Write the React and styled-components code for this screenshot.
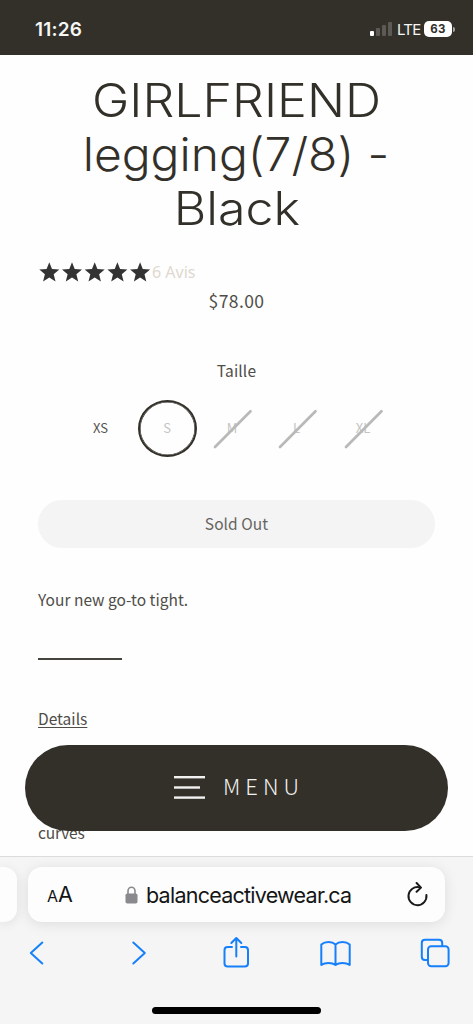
import React from "react";
import styled, { createGlobalStyle } from "styled-components";

const INK = "#33302a";
const BODY = `"Noto Sans CJK JP", "Noto Sans", sans-serif`;
const SYSTEM = `Inter, "Liberation Sans", sans-serif`;

const GlobalStyle = createGlobalStyle`
  * { box-sizing: border-box; }
  body { margin: 0; background: #fefefe; -webkit-font-smoothing: antialiased; }
`;

const Screen = styled.div`
  width: 473px;
  height: 1024px;
  display: flex;
  flex-direction: column;
  overflow: hidden;
  background: #fefefe;
  color: #4f4d48;
  font-family: ${BODY};
`;

const StatusBar = styled.header`
  height: 55px;
  flex: none;
  display: flex;
  align-items: center;
  justify-content: space-between;
  padding: 3px 18px 0 35px;
  background: ${INK};
  color: #f6f6f5;
  font-family: ${SYSTEM};
`;

const Clock = styled.span`
  font-size: 19px;
  font-weight: 600;
  letter-spacing: 0.2px;
`;

const StatusIcons = styled.div`
  display: flex;
  align-items: center;
`;

const Signal = styled.div`
  display: flex;
  align-items: flex-end;
  gap: 2px;
  height: 14px;
`;

const SignalBar = styled.i`
  width: 4px;
  height: ${(p) => p.$h}px;
  border-radius: 1px;
  background: ${(p) => (p.$on ? "#fff" : "#5d5a55")};
`;

const Network = styled.span`
  width: 22px;
  margin: 0 5px 0 5px;
  font-size: 15px;
  font-weight: 400;
  letter-spacing: -0.75px;
  white-space: nowrap;
`;

const Battery = styled.span`
  width: 28px;
  height: 16px;
  border-radius: 5px;
  background: #fff;
  color: ${INK};
  font-size: 11.5px;
  font-weight: 700;
  line-height: 16px;
  text-align: center;
  letter-spacing: 0.3px;
`;

const BatteryTip = styled.i`
  width: 2px;
  height: 5px;
  margin-left: 1px;
  border-radius: 0 2px 2px 0;
  background: #a5a39f;
`;

const Page = styled.main`
  position: relative;
  height: 801px;
  flex: none;
  overflow: hidden;
  display: flex;
  flex-direction: column;
  padding: 18px 38px 0;
`;

const Title = styled.h1`
  margin: 0;
  display: flex;
  flex-direction: column;
  align-items: center;
  font-family: ${SYSTEM};
  font-weight: 300;
  font-size: 46px;
  line-height: 54px;
  color: ${INK};
`;

const TitleLine = styled.span`
  white-space: pre;
  transform: scaleX(${(p) => p.$stretch});
`;

const Rating = styled.div`
  display: flex;
  align-items: center;
  height: 24px;
  margin-top: 25px;
`;

const Stars = styled.svg`
  width: 114px;
  height: 22px;
  fill: #333;
`;

const Reviews = styled.span`
  font-family: "Noto Sans", sans-serif;
  font-size: 16px;
  line-height: 24px;
  color: #e0d8d0;
`;

const Price = styled.div`
  height: 28px;
  margin-top: 3px;
  text-align: center;
  font-size: 17.5px;
  line-height: 28px;
  letter-spacing: 0.4px;
`;

const OptionLabel = styled.div`
  height: 24px;
  margin-top: 43px;
  text-align: center;
  font-size: 15.5px;
  line-height: 24px;
  letter-spacing: 0.15px;
`;

const Sizes = styled.div`
  display: flex;
  height: 58px;
  margin: 18px 0 0 29px;
`;

const Size = styled.div`
  position: relative;
  width: ${(p) => p.$w}px;
  display: flex;
  align-items: center;
  justify-content: center;
  padding-bottom: 2px;
  font-size: 13px;
  line-height: 20px;
  color: ${(p) => (p.$out ? "#c4c4c3" : "#55534e")};
`;

const Ring = styled.span`
  width: 59px;
  height: 57px;
  display: flex;
  align-items: center;
  justify-content: center;
  border: 2px solid ${INK};
  border-radius: 50%;
  box-shadow: inset 0 0 0 0.6px ${INK};
`;

const Slash = styled.svg`
  position: absolute;
  left: 50%;
  top: 50%;
  width: 40px;
  height: 40px;
  margin: -20px 0 0 -19px;
  stroke: #b9b9b8;
  stroke-width: 2.7;
  stroke-linecap: round;
`;

const SoldOut = styled.button`
  height: 48px;
  flex: none;
  margin-top: 42px;
  padding: 0 0 2px;
  border: 0;
  border-radius: 24px;
  background: #f4f4f4;
  color: #666460;
  font: 400 15.5px/24px ${BODY};
  letter-spacing: 0.05px;
`;

const Copy = styled.p`
  margin: ${(p) => p.$top}px 0 0;
  height: 24px;
  font-size: 15.5px;
  line-height: 24px;
  letter-spacing: ${(p) => p.$track ?? 0.02}px;
`;

const Underlined = styled.span`
  text-decoration: underline;
  text-decoration-thickness: 1.4px;
  text-underline-offset: 2px;
`;

const Rule = styled.hr`
  width: 84px;
  height: 2px;
  flex: none;
  margin: 47px 0 0;
  border: 0;
  background: #45433d;
`;

const MenuButton = styled.button`
  position: absolute;
  left: 25px;
  bottom: 25px;
  width: 423px;
  height: 86px;
  display: flex;
  align-items: center;
  padding: 0 0 0 149px;
  gap: 18px;
  border: 0;
  border-radius: 43px;
  background: ${INK};
  color: #f2f1ef;
  font: 300 22px/30px ${BODY};
  letter-spacing: 5px;
`;

const MenuLabel = styled.span`
  height: 36px;
  line-height: 30px;
`;

const Browser = styled.footer`
  height: 168px;
  flex: none;
  display: flex;
  flex-direction: column;
  align-items: center;
  border-top: 1px solid #dcdcdc;
  background: #f5f5f5;
`;

const Tabs = styled.div`
  width: 473px;
  height: 66px;
  display: flex;
  gap: 11px;
  padding-top: 10px;
`;

const PreviousTab = styled.div`
  width: 17px;
  height: 55px;
  border-radius: 0 13px 13px 0;
  background: #fdfdfd;
  box-shadow: 0 2px 12px rgba(0, 0, 0, 0.09);
`;

const Address = styled.div`
  width: 417px;
  height: 55px;
  display: flex;
  align-items: center;
  padding: 0 17px 0 19px;
  border-radius: 14px;
  background: #fdfdfd;
  box-shadow: 0 2px 14px rgba(0, 0, 0, 0.1);
  color: #151515;
  font-family: ${SYSTEM};
`;

const TextSize = styled.span`
  width: 78px;
  font-size: 21.5px;
  line-height: 28px;
  small { font-size: 16px; }
`;

const Url = styled.span`
  flex: 1;
  margin-left: 8px;
  font-size: 21.5px;
  line-height: 28px;
  letter-spacing: -0.75px;
  white-space: nowrap;
`;

const Toolbar = styled.nav`
  width: 442px;
  display: flex;
  justify-content: space-between;
  margin-top: 8px;
`;

const ToolIcon = styled.svg`
  width: 44px;
  height: 44px;
  fill: none;
  stroke: #1680fb;
  stroke-width: 2;
  stroke-linecap: round;
  stroke-linejoin: round;
`;

const HomeIndicator = styled.div`
  width: 169px;
  height: 6.5px;
  margin-top: 32px;
  border-radius: 4px;
  background: #000;
`;

const star = "M10 0.5 L12.7 7.4 L20 7.9 L14.4 12.6 L16.2 19.8 L10 15.8 L3.8 19.8 L5.6 12.6 L0 7.9 L7.3 7.4 Z";

const SIZES = [
  { label: "XS", w: 67 },
  { label: "S", w: 66, out: true, selected: true },
  { label: "M", w: 64, out: true, slash: true },
  { label: "L", w: 65, out: true, slash: true },
  { label: "XL", w: 68, out: true, slash: true },
];

const TOOLS = [
  <path key="back" d="M26.3 11.5 L14.8 22 L26.3 32.5" />,
  <path key="next" d="M18.3 11.5 L29.8 22 L18.3 32.5" />,
  <g key="share">
    <path d="M17 16 H12.7 Q9.5 16 9.5 19.2 V32.5 Q9.5 35.5 12.7 35.5 H29.8 Q33 35.5 33 32.5 V19.2 Q33 16 29.8 16 H26" />
    <path d="M21.3 25.5 V7.5 M16.3 12 L21.3 7 L26.3 12" />
  </g>,
  <path key="book" d="M21.5 13.5 C18 10.2 11 10.2 7.3 13.5 V34 C11 31.3 18 31.3 21.5 34 C25 31.3 32 31.3 35.7 34 V13.5 C32 10.2 25 10.2 21.5 13.5 V34" />,
  <g key="tabs">
    <path d="M13.5 29 H11 Q7.8 29 7.8 25.8 V12 Q7.8 8.8 11 8.8 H25 Q28.2 8.8 28.2 12 V14.5" />
    <rect x="14" y="15.2" width="20.6" height="20" rx="3.2" />
  </g>,
];

export default function App() {
  return (
    <Screen>
      <GlobalStyle />
      <StatusBar>
        <Clock>11:26</Clock>
        <StatusIcons>
          <Signal>
            <SignalBar $h={5} $on />
            <SignalBar $h={8} />
            <SignalBar $h={11} />
            <SignalBar $h={14} />
          </Signal>
          <Network>LTE</Network>
          <Battery>63</Battery>
          <BatteryTip />
        </StatusIcons>
      </StatusBar>

      <Page>
        <Title>
          <TitleLine $stretch={1.09}>GIRLFRIEND</TitleLine>
          <TitleLine $stretch={1.043}>legging(7/8) -</TitleLine>
          <TitleLine $stretch={1.09}>Black</TitleLine>
        </Title>
        <Rating>
          <Stars viewBox="0 0 114 22">
            {[0, 1, 2, 3, 4].map((i) => (
              <path key={i} d={star} transform={`translate(${1.3 + i * 22.7} 0.7)`} />
            ))}
          </Stars>
          <Reviews>6 Avis</Reviews>
        </Rating>
        <Price>$78.00</Price>
        <OptionLabel>Taille</OptionLabel>
        <Sizes>
          {SIZES.map((s) => (
            <Size key={s.label} $w={s.w} $out={s.out}>
              {s.selected ? <Ring>{s.label}</Ring> : s.label}
              {s.slash && (
                <Slash viewBox="0 0 40 40">
                  <path d="M2 38 L37.5 2.2" />
                </Slash>
              )}
            </Size>
          ))}
        </Sizes>
        <SoldOut>Sold Out</SoldOut>
        <Copy $top={39}>Your new go-to tight.</Copy>
        <Rule />
        <Copy $top={46}>
          <Underlined>Details</Underlined>
        </Copy>
        <Copy $top={90} $track={-0.2}>curves</Copy>
        <MenuButton>
          <svg width="31" height="24" viewBox="0 0 31 24" fill="#f2f1ef">
            <rect y="0" width="31" height="2.4" />
            <rect y="10.3" width="26" height="2.4" />
            <rect y="20.4" width="31" height="2.4" />
          </svg>
          <MenuLabel>MENU</MenuLabel>
        </MenuButton>
      </Page>

      <Browser>
        <Tabs>
          <PreviousTab />
          <Address>
            <TextSize>
              <small>A</small>A
            </TextSize>
            <svg width="13" height="18" viewBox="0 0 13 18">
              <path d="M3 9 V5 a3.5 3.7 0 0 1 7 0 V9" fill="none" stroke="#8a8a8e" strokeWidth="1.6" />
              <rect x="0.5" y="7.5" width="12" height="10" rx="1.8" fill="#8a8a8e" />
            </svg>
            <Url>balanceactivewear.ca</Url>
            <svg width="22" height="26" viewBox="0 0 22 26" fill="none" stroke="#1a1a1a" strokeWidth="2" strokeLinecap="round" strokeLinejoin="round">
              <path d="M13.6 5.4 A9 9 0 1 0 20.4 13" />
              <path d="M10.6 1 L15 5.6 L10.6 9.8" />
            </svg>
          </Address>
        </Tabs>
        <Toolbar>
          {TOOLS.map((icon) => (
            <ToolIcon key={icon.key} viewBox="0 0 44 44">
              {icon}
            </ToolIcon>
          ))}
        </Toolbar>
        <HomeIndicator />
      </Browser>
    </Screen>
  );
}
